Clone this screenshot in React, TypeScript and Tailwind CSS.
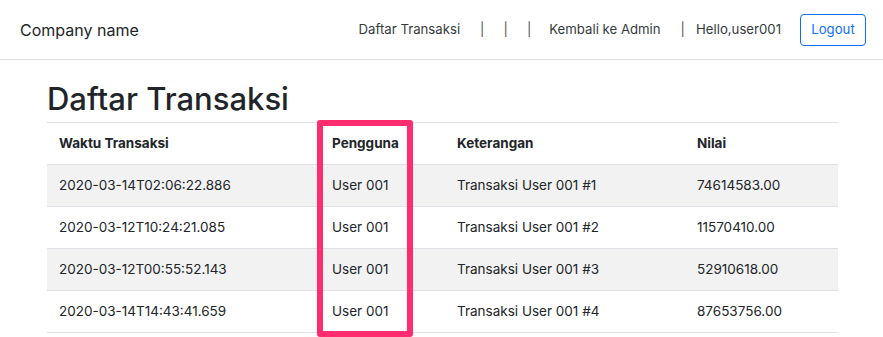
import React from "react";

const rows = [
  { waktu: "2020-03-14T02:06:22.886", user: "User 001", ket: "Transaksi User 001 #1", nilai: "74614583.00" },
  { waktu: "2020-03-12T10:24:21.085", user: "User 001", ket: "Transaksi User 001 #2", nilai: "11570410.00" },
  { waktu: "2020-03-12T00:55:52.143", user: "User 001", ket: "Transaksi User 001 #3", nilai: "52910618.00" },
  { waktu: "2020-03-14T14:43:41.659", user: "User 001", ket: "Transaksi User 001 #4", nilai: "87653756.00" },
];

function Navbar() {
  return (
    <header className="flex h-[60px] items-center border-b border-[#e0e0e0] bg-white pl-5 pr-[17px] shadow-[0_1px_2px_rgba(0,0,0,0.04)]">
      <span className="text-[16px] text-[#212529]">Company name</span>
      <nav className="ml-auto flex items-center text-[13.2px] text-[#343a40]">
        <span>Daftar Transaksi</span>
        <span className="ml-[20px] text-[#555]">|</span>
        <span className="ml-[19px] text-[#555]">|</span>
        <span className="ml-[19px] text-[#555]">|</span>
        <span className="ml-[18px]">Kembali ke Admin</span>
        <span className="ml-[20px] text-[#555]">|</span>
        <span className="ml-[11px]">Hello,user001</span>
        <button className="ml-[19px] h-8 w-[66px] rounded border border-[#0d6efd] text-[13.2px] text-[#0d6efd]">
          Logout
        </button>
      </nav>
    </header>
  );
}

export default function App() {
  return (
    <div className="min-h-[337px] bg-white font-['Inter',sans-serif] text-[#212529]">
      <Navbar />
      <main className="px-[47px] pr-[45px]">
        <h1 className="mt-[15px] text-[31px] leading-[47px] font-medium">Daftar Transaksi</h1>
        <div className="relative">
          <table className="w-full table-fixed border-collapse text-[13.5px]">
            <colgroup>
              <col className="w-[273px]" />
              <col className="w-[125px]" />
              <col className="w-[240px]" />
              <col />
            </colgroup>
            <thead>
              <tr className="h-[42px] border-y border-[#dee2e6]">
                <th className="px-3 text-left font-bold">Waktu Transaksi</th>
                <th className="px-3 text-left font-bold">Pengguna</th>
                <th className="px-3 text-left font-bold">Keterangan</th>
                <th className="px-3 text-left font-bold">Nilai</th>
              </tr>
            </thead>
            <tbody>
              {rows.map((r, i) => (
                <tr
                  key={r.waktu}
                  className={`h-[42px] border-b border-[#dee2e6] ${i % 2 === 0 ? "bg-[#f2f2f2]" : "bg-white"}`}
                >
                  <td className="px-3">{r.waktu}</td>
                  <td className="px-3">{r.user}</td>
                  <td className="px-3">{r.ket}</td>
                  <td className="px-3">{r.nilai}</td>
                </tr>
              ))}
            </tbody>
          </table>
          {/* highlight around the Pengguna column */}
          <div className="pointer-events-none absolute top-[-2px] left-[270px] h-[217px] w-[96px] rounded-[3px] border-[6px] border-[#ff2d6f]" />
        </div>
      </main>
    </div>
  );
}
